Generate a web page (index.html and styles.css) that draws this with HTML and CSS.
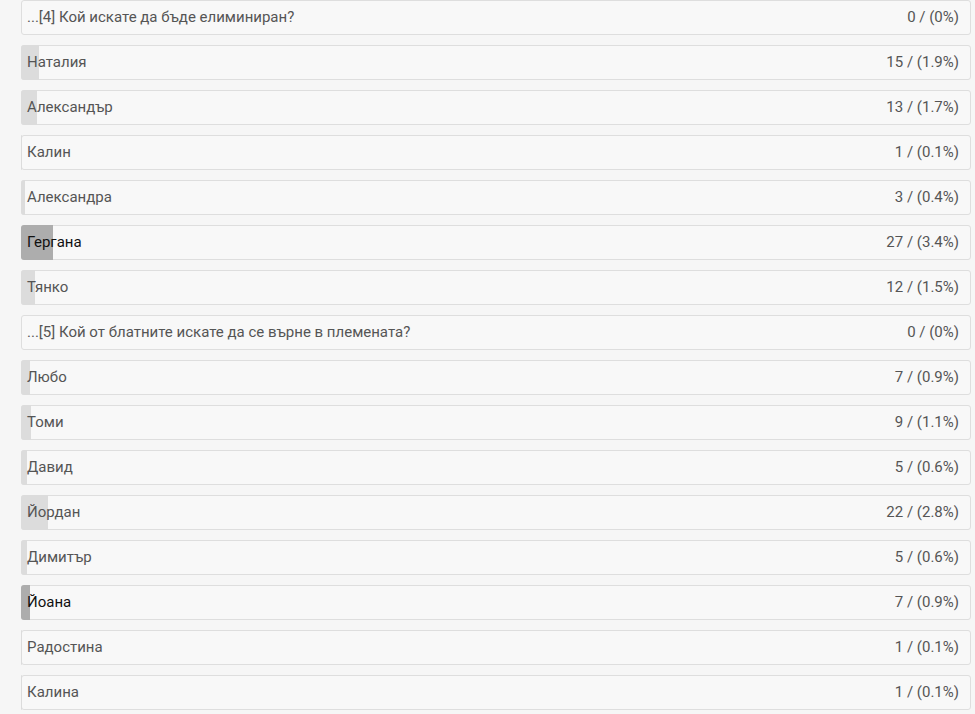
FILE: index.html
```html
<!DOCTYPE html>
<html lang="bg">
<head>
<meta charset="utf-8">
<link rel="stylesheet" href="styles.css">
</head>
<body>
<div class="list">
  <div class="row"><span class="label">...[4] Кой искате да бъде елиминиран?</span><span class="count">0 / (0%)</span></div>
  <div class="row"><span class="bar" style="width:1.9%"></span><span class="label">Наталия</span><span class="count">15 / (1.9%)</span></div>
  <div class="row"><span class="bar" style="width:1.7%"></span><span class="label">Александър</span><span class="count">13 / (1.7%)</span></div>
  <div class="row"><span class="bar" style="width:0.1%"></span><span class="label">Калин</span><span class="count">1 / (0.1%)</span></div>
  <div class="row"><span class="bar" style="width:0.4%"></span><span class="label">Александра</span><span class="count">3 / (0.4%)</span></div>
  <div class="row top"><span class="bar" style="width:3.4%"></span><span class="label">Гергана</span><span class="count">27 / (3.4%)</span></div>
  <div class="row"><span class="bar" style="width:1.5%"></span><span class="label">Тянко</span><span class="count">12 / (1.5%)</span></div>
  <div class="row"><span class="label">...[5] Кой от блатните искате да се върне в племената?</span><span class="count">0 / (0%)</span></div>
  <div class="row"><span class="bar" style="width:0.9%"></span><span class="label">Любо</span><span class="count">7 / (0.9%)</span></div>
  <div class="row"><span class="bar" style="width:1.1%"></span><span class="label">Томи</span><span class="count">9 / (1.1%)</span></div>
  <div class="row"><span class="bar" style="width:0.6%"></span><span class="label">Давид</span><span class="count">5 / (0.6%)</span></div>
  <div class="row"><span class="bar" style="width:2.8%"></span><span class="label">Йордан</span><span class="count">22 / (2.8%)</span></div>
  <div class="row"><span class="bar" style="width:0.6%"></span><span class="label">Димитър</span><span class="count">5 / (0.6%)</span></div>
  <div class="row top"><span class="bar" style="width:0.9%"></span><span class="label">Йоана</span><span class="count">7 / (0.9%)</span></div>
  <div class="row"><span class="bar" style="width:0.1%"></span><span class="label">Радостина</span><span class="count">1 / (0.1%)</span></div>
  <div class="row"><span class="bar" style="width:0.1%"></span><span class="label">Калина</span><span class="count">1 / (0.1%)</span></div>
</div>
</body>
</html>
```

FILE: styles.css
```css
html, body {
  margin: 0;
  padding: 0;
  background: #f6f6f6;
}
body {
  font-family: Roboto, "Liberation Sans", Arial, sans-serif;
  font-size: 15px;
  color: #555;
}
.list {
  display: flex;
  flex-direction: column;
  gap: 10px;
  padding: 0 4px 0 21px;
}
.row {
  position: relative;
  box-sizing: border-box;
  height: 35px;
  border: 1px solid #dedede;
  border-radius: 3px;
  background: #f8f8f8;
  display: flex;
  align-items: center;
  justify-content: space-between;
  padding: 0 11px 2px 5px;
}
.bar {
  position: absolute;
  left: -1px;
  top: -1px;
  height: 35px;
  background: #dcdcdc;
  border-radius: 3px 0 0 3px;
}
.row.top .bar {
  background: #adadad;
}
.row.top .label {
  color: #111;
}
.label, .count {
  position: relative;
  white-space: nowrap;
}
```
